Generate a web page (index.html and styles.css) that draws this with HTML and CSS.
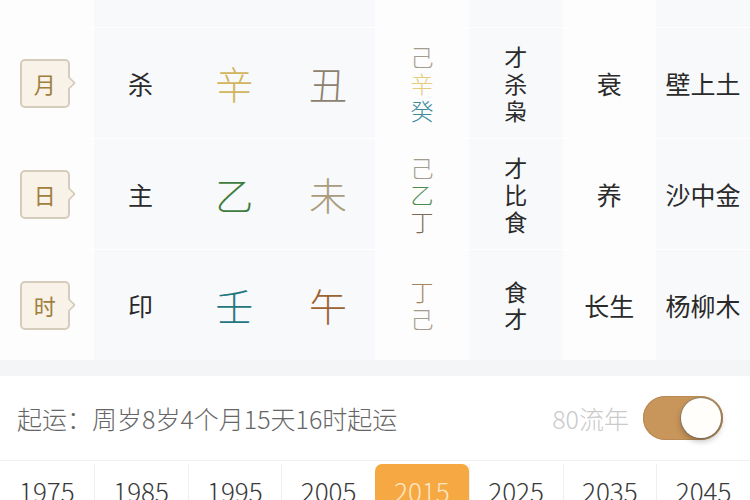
FILE: index.html
```html
<!DOCTYPE html>
<html lang="zh">
<head>
<meta charset="utf-8">
<link rel="stylesheet" href="styles.css">
</head>
<body>
<div class="page">
  <div class="chart">
    <div class="row row-cut">
      <div class="cell"></div><div class="cell"></div><div class="cell"></div><div class="cell"></div>
      <div class="cell"></div><div class="cell"></div><div class="cell"></div><div class="cell"></div>
    </div>
    <div class="row">
      <div class="cell"><span class="badge">月</span></div>
      <div class="cell"><span class="god">杀</span></div>
      <div class="cell"><span class="big c-xin">辛</span></div>
      <div class="cell"><span class="big c-chou">丑</span></div>
      <div class="cell"><span class="stack"><i class="c-ji">己</i><i class="c-xin2">辛</i><i class="c-gui">癸</i></span></div>
      <div class="cell"><span class="stack dark"><i>才</i><i>杀</i><i>枭</i></span></div>
      <div class="cell"><span class="god">衰</span></div>
      <div class="cell"><span class="god">壁上土</span></div>
    </div>
    <div class="row">
      <div class="cell"><span class="badge">日</span></div>
      <div class="cell"><span class="god">主</span></div>
      <div class="cell"><span class="big c-yi">乙</span></div>
      <div class="cell"><span class="big c-wei">未</span></div>
      <div class="cell"><span class="stack"><i class="c-ji">己</i><i class="c-yi2">乙</i><i class="c-ding">丁</i></span></div>
      <div class="cell"><span class="stack dark"><i>才</i><i>比</i><i>食</i></span></div>
      <div class="cell"><span class="god">养</span></div>
      <div class="cell"><span class="god">沙中金</span></div>
    </div>
    <div class="row">
      <div class="cell"><span class="badge">时</span></div>
      <div class="cell"><span class="god">印</span></div>
      <div class="cell"><span class="big c-ren">壬</span></div>
      <div class="cell"><span class="big c-wu">午</span></div>
      <div class="cell"><span class="stack"><i class="c-ding2">丁</i><i class="c-ji">己</i></span></div>
      <div class="cell"><span class="stack dark"><i>食</i><i>才</i></span></div>
      <div class="cell"><span class="god">长生</span></div>
      <div class="cell"><span class="god">杨柳木</span></div>
    </div>
  </div>
  <div class="band"></div>
  <div class="qiyun">
    <span class="qy-text">起运：周岁8岁4个月15天16时起运</span>
    <div class="qy-right">
      <span class="liunian">80流年</span>
      <span class="toggle"><span class="knob"></span></span>
    </div>
  </div>
  <div class="years">
    <div class="year">1975</div>
    <div class="year">1985</div>
    <div class="year">1995</div>
    <div class="year">2005</div>
    <div class="year active">2015</div>
    <div class="year">2025</div>
    <div class="year">2035</div>
    <div class="year">2045</div>
  </div>
</div>
</body>
</html>
```
FILE: styles.css
```css
html, body {
  margin: 0;
  padding: 0;
  background: #ffffff;
}
body {
  font-family: "Noto Sans CJK SC", "Noto Sans", sans-serif;
  font-weight: 300;
  color: #333;
  width: 750px;
  height: 500px;
  overflow: hidden;
}
.page {
  width: 750px;
}
.chart {
  display: flex;
  flex-direction: column;
  gap: 1px;
  background: #ffffff;
}
.row {
  display: grid;
  grid-template-columns: repeat(8, 1fr);
  height: 110px;
}
.row-cut {
  height: 27px;
}
.cell {
  display: flex;
  align-items: center;
  justify-content: center;
  background: #f8f9fb;
}
.cell:nth-child(1) { background: #fdfdfd; }
.cell:nth-child(5),
.cell:nth-child(7) { background: #fdfdfe; }

.badge {
  position: relative;
  width: 46px;
  height: 45px;
  box-sizing: content-box;
  border: 2px solid #d6ccbb;
  border-radius: 5px;
  background: #f8f2e8;
  color: #a07f3c;
  font-size: 22px;
  font-weight: 400;
  display: flex;
  align-items: center;
  justify-content: center;
  margin-right: 4px;
}
.badge::after {
  content: "";
  position: absolute;
  right: -6px;
  top: 50%;
  width: 8px;
  height: 8px;
  margin-top: -5px;
  background: #f8f2e8;
  border-right: 2px solid #d6ccbb;
  border-top: 2px solid #d6ccbb;
  transform: rotate(45deg);
  border-radius: 0 2px 0 0;
}
.god {
  font-size: 25px;
  font-weight: 400;
  color: #2a2a2a;
}
.big {
  font-size: 38px;
  line-height: 1;
}
.c-xin { color: #d2b55e; }
.c-chou { color: #8c8270; }
.c-yi { color: #3f7d3f; }
.c-wei { color: #aa9c7c; }
.c-ren { color: #24767e; }
.c-wu { color: #9b6232; }

.stack {
  display: flex;
  flex-direction: column;
  align-items: center;
  font-size: 23px;
  line-height: 27px;
}
.stack i {
  font-style: normal;
}
.stack.dark { color: #2a2a2a; font-weight: 400; }
.c-ji { color: #a49c8c; }
.c-xin2 { color: #e3cc7c; }
.c-gui { color: #3f8c9c; }
.c-yi2 { color: #4d8a4d; }
.c-ding { color: #7a6a58; }
.c-ding2 { color: #a88562; }

.band {
  height: 16px;
  background: #f4f5f7;
}
.qiyun {
  height: 84px;
  display: flex;
  align-items: center;
  justify-content: space-between;
  padding: 0 27px 0 17px;
  border-bottom: 1px solid #f0f0f0;
}
.qy-text {
  font-size: 25px;
  color: #666;
}
.qy-right {
  display: flex;
  align-items: center;
  gap: 14px;
}
.liunian {
  font-size: 25px;
  color: #cacaca;
}
.toggle {
  position: relative;
  width: 80px;
  height: 44px;
  border-radius: 22px;
  background: #c8955a;
  display: flex;
  align-items: center;
  justify-content: flex-end;
  padding-right: 2px;
  box-sizing: border-box;
  box-shadow: 0 0 0 1px #b88a55 inset;
}
.knob {
  width: 40px;
  height: 40px;
  border-radius: 50%;
  background: #fffefb;
  box-shadow: 0 3px 6px rgba(0, 0, 0, 0.28), 0 0 0 1px #9a8a72;
}
.years {
  display: grid;
  grid-template-columns: repeat(8, 1fr);
  height: 40px;
  padding-top: 3px;
}
.year {
  font-size: 26px;
  color: #3a3a3a;
  text-align: center;
  line-height: 1;
  padding-top: 14px;
  border-left: 1px solid #efefef;
}
.year:first-child { border-left: none; }
.year.active {
  background: #f6a942;
  color: #fde6c4;
  border-radius: 7px 7px 0 0;
  border-left: none;
}
```
